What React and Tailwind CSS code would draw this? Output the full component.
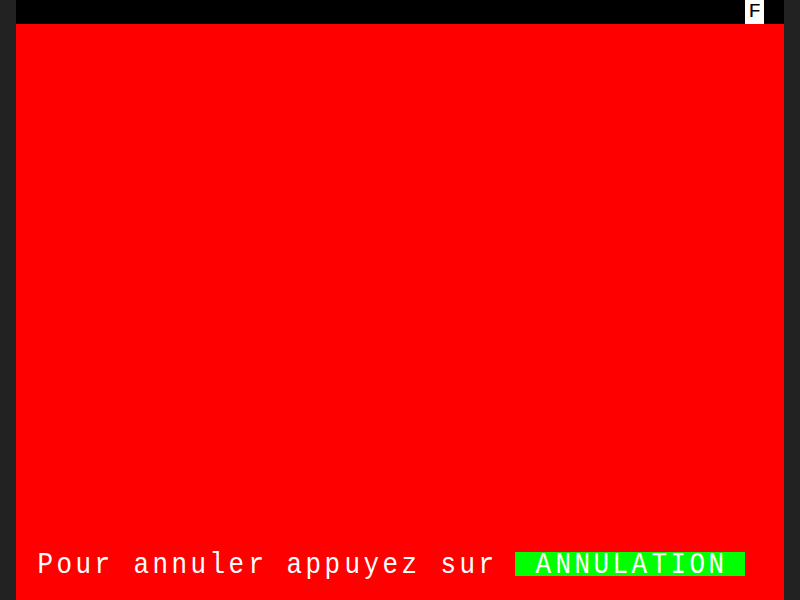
import React from "react";

const COLS = 40;
const ROWS = 25;

// one minitel character cell
const Cell = ({ ch, bg, fg, status }) => (
  <div
    className={`w-[19.2px] h-[24px] flex items-start justify-center ${bg} ${fg}`}
  >
    {status ? (
      <span className="block text-[21px] leading-[24px] whitespace-pre">{ch}</span>
    ) : (
      <span className="block text-[24px] leading-[24px] scale-y-[1.2] scale-x-[1.08] origin-top -translate-y-px whitespace-pre">
        {ch}
      </span>
    )}
  </div>
);

const buildRow = (r) => {
  const cells = [];
  for (let c = 0; c < COLS; c++) {
    let ch = " ";
    let bg = r === 0 ? "bg-black" : "bg-[#ff0000]";
    let fg = "text-white";
    if (r === 0 && c === 38) {
      ch = "F";
      bg = "bg-white";
      fg = "text-black";
    }
    if (r === 23) {
      const msg = "Pour annuler appuyez sur";
      const btn = " ANNULATION ";
      if (c >= 1 && c <= msg.length) ch = msg[c - 1];
      if (c >= 26 && c < 26 + btn.length) {
        ch = btn[c - 26];
        bg = "bg-[#00ff00]";
      }
    }
    cells.push(<Cell key={c} ch={ch} bg={bg} fg={fg} status={r === 0} />);
  }
  return cells;
};

export default function App() {
  const rows = [];
  for (let r = 0; r < ROWS; r++) rows.push(r);

  return (
    <div
      className="w-[800px] h-[600px] bg-[#222222] flex justify-center"
      style={{ fontFamily: '"Liberation Mono", "DejaVu Sans Mono", monospace' }}
    >
      <div className="w-[768px] h-[600px] flex flex-col">
        {rows.map((r) => (
          <div key={r} className="flex">
            {buildRow(r)}
          </div>
        ))}
      </div>
    </div>
  );
}
